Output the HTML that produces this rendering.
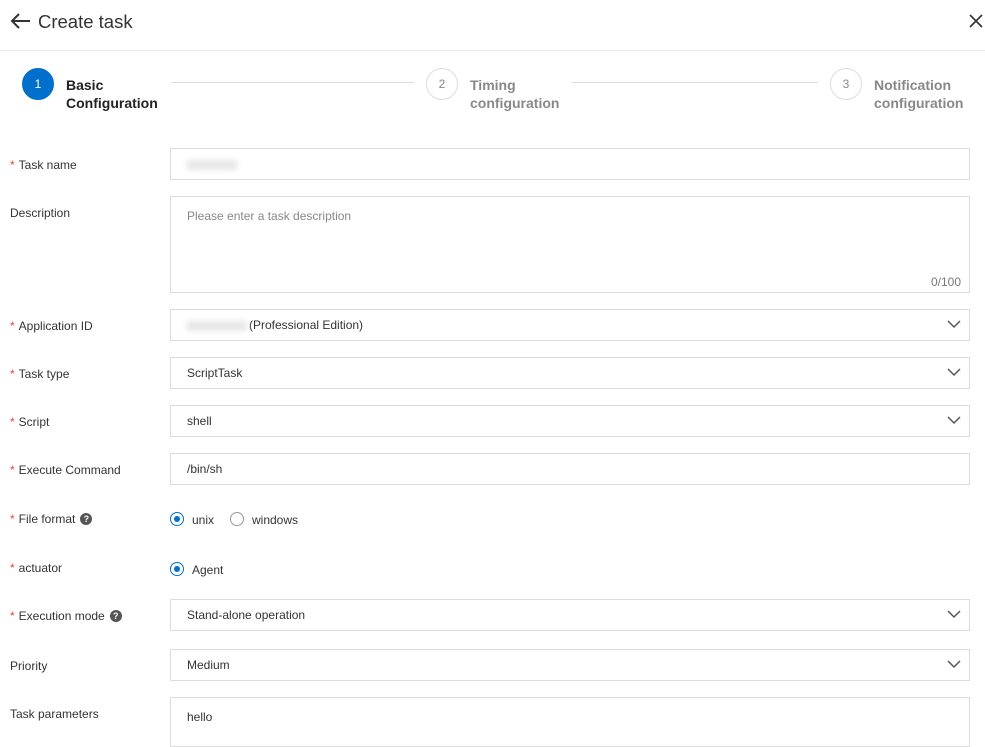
<!DOCTYPE html>
<html><head><meta charset="utf-8"><style>
*{box-sizing:border-box;margin:0;padding:0}
body{width:985px;height:734px;overflow:hidden;background:#fff;font-family:"Liberation Sans",sans-serif;color:#333;position:relative;font-size:12px}
.a{position:absolute}
.lbl{position:absolute;left:10px;font-size:12px;color:#333}
.lbl i{color:#e84738;font-style:normal;margin-right:4px}
.in{position:absolute;left:170px;width:800px;height:32px;border:1px solid #dcdcdc;padding-left:16px;line-height:30px;font-size:12px;color:#333}
.chev{position:absolute;right:8px;top:10px}
.blur{display:inline-block;width:60px;height:10px;background:#e6e6e6;filter:blur(3px);vertical-align:middle;margin-right:2px}
.q{display:inline-block;width:12px;height:12px;border-radius:50%;background:#555;color:#fff;font-size:9px;font-weight:bold;text-align:center;line-height:12px;margin-left:5px;vertical-align:1px}
.rad{position:absolute;width:14px;height:14px;border-radius:50%;border:1px solid #999;background:#fff}
.rad.on{border:1.5px solid #0070cc}
.rad.on:after{content:"";position:absolute;left:2.5px;top:2.5px;width:6px;height:6px;border-radius:50%;background:#0070cc}
.step{position:absolute;width:32px;height:32px;border-radius:50%;text-align:center;line-height:30px;font-size:12px}
.st{position:absolute;font-size:14px;font-weight:bold;line-height:18px}
</style></head><body>
<svg class="a" style="left:10px;top:12px" width="22" height="18" viewBox="0 0 22 18"><path d="M20 9H2M9 2L2 9l7 7" stroke="#333" stroke-width="2" fill="none"/></svg>
<div class="a" style="left:38px;top:11px;font-size:18.5px;color:#333">Create task</div>
<svg class="a" style="left:969px;top:14px" width="14" height="14" viewBox="0 0 14 14"><path d="M1 1L13 13M13 1L1 13" stroke="#333" stroke-width="1.6"/></svg>
<div class="a" style="left:0;top:50px;width:985px;height:1px;background:#e8e8e8"></div>

<div class="step" style="left:22px;top:68px;background:#0070cc;color:#fff;border:1px solid #0070cc">1</div>
<div class="st" style="left:66px;top:76px;color:#222">Basic<br>Configuration</div>
<div class="a" style="left:171px;top:82px;width:243px;height:1px;background:#ddd"></div>
<div class="step" style="left:426px;top:68px;border:1px solid #ddd;color:#888">2</div>
<div class="st" style="left:470px;top:76px;color:#888">Timing<br>configuration</div>
<div class="a" style="left:572px;top:82px;width:246px;height:1px;background:#ddd"></div>
<div class="step" style="left:830px;top:68px;border:1px solid #ddd;color:#888">3</div>
<div class="st" style="left:874px;top:76px;color:#888">Notification<br>configuration</div>

<div class="lbl" style="top:158px"><i>*</i>Task name</div>
<div class="in" style="top:148px"><span class="blur" style="width:50px"></span></div>

<div class="lbl" style="top:206px">Description</div>
<div class="in" style="top:196px;height:97px;color:#888;line-height:38px">Please enter a task description<span class="a" style="right:8px;bottom:0;line-height:20px;color:#777">0/100</span></div>

<svg width="0" height="0" style="position:absolute"><defs><path id="cv" d="M1 1l6 6 6-6" stroke="#555" stroke-width="1.5" fill="none"/></defs></svg>

<div class="lbl" style="top:319px"><i>*</i>Application ID</div>
<div class="in" style="top:309px"><span class="blur"></span>(Professional Edition)<svg class="chev" width="14" height="9"><use href="#cv"/></svg></div>

<div class="lbl" style="top:367px"><i>*</i>Task type</div>
<div class="in" style="top:357px">ScriptTask<svg class="chev" width="14" height="9"><use href="#cv"/></svg></div>

<div class="lbl" style="top:415px"><i>*</i>Script</div>
<div class="in" style="top:405px">shell<svg class="chev" width="14" height="9"><use href="#cv"/></svg></div>

<div class="lbl" style="top:463px"><i>*</i>Execute Command</div>
<div class="in" style="top:453px">/bin/sh</div>

<div class="lbl" style="top:512px"><i>*</i>File format<span class="q">?</span></div>
<div class="rad on" style="left:170px;top:512px"></div>
<div class="a" style="left:192px;top:513px">unix</div>
<div class="rad" style="left:230px;top:512px"></div>
<div class="a" style="left:252px;top:513px">windows</div>

<div class="lbl" style="top:561px"><i>*</i>actuator</div>
<div class="rad on" style="left:170px;top:562px"></div>
<div class="a" style="left:192px;top:563px">Agent</div>

<div class="lbl" style="top:609px"><i>*</i>Execution mode<span class="q">?</span></div>
<div class="in" style="top:599px">Stand-alone operation<svg class="chev" width="14" height="9"><use href="#cv"/></svg></div>

<div class="lbl" style="top:659px">Priority</div>
<div class="in" style="top:649px">Medium<svg class="chev" width="14" height="9"><use href="#cv"/></svg></div>

<div class="lbl" style="top:707px">Task parameters</div>
<div class="in" style="top:697px;height:50px;line-height:38px">hello</div>
</body></html>
